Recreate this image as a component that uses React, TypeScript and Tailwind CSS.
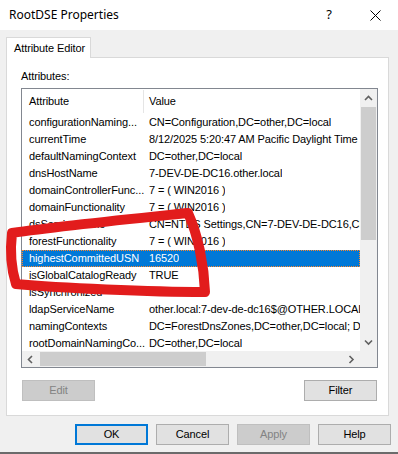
import React from "react";

const rows: [string, string][] = [
  ["configurationNaming...", "CN=Configuration,DC=other,DC=local"],
  ["currentTime", "8/12/2025 5:20:47 AM Pacific Daylight Time"],
  ["defaultNamingContext", "DC=other,DC=local"],
  ["dnsHostName", "7-DEV-DE-DC16.other.local"],
  ["domainControllerFunc...", "7 = ( WIN2016 )"],
  ["domainFunctionality", "7 = ( WIN2016 )"],
  ["dsServiceName", "CN=NTDS Settings,CN=7-DEV-DE-DC16,CN=Servers,CN=Default-First-Site-Name"],
  ["forestFunctionality", "7 = ( WIN2016 )"],
  ["highestCommittedUSN", "16520"],
  ["isGlobalCatalogReady", "TRUE"],
  ["isSynchronized", "TRUE"],
  ["ldapServiceName", "other.local:7-dev-de-dc16$@OTHER.LOCAL"],
  ["namingContexts", "DC=ForestDnsZones,DC=other,DC=local; DC=DomainDnsZones"],
  ["rootDomainNamingCo...", "DC=other,DC=local"],
];

function Chevron({ dir }: { dir: "up" | "down" | "left" | "right" }) {
  const pts: Record<string, string> = {
    up: "1,5 4.5,1.5 8,5",
    down: "1,1.5 4.5,5 8,1.5",
    left: "5,1 1.5,4.5 5,8",
    right: "1.5,1 5,4.5 1.5,8",
  };
  const vertical = dir === "up" || dir === "down";
  return (
    <svg width={vertical ? 9 : 7} height={vertical ? 7 : 9} viewBox={vertical ? "0 0 9 7" : "0 0 7 9"}>
      <polyline points={pts[dir]} fill="none" stroke="#606060" strokeWidth="1.6" />
    </svg>
  );
}

export default function App() {
  return (
    <div className="relative w-[398px] h-[454px] bg-[#f0f0f0] overflow-hidden font-['Liberation_Sans',Arial,sans-serif] text-[11px] tracking-[-0.1px] text-black">
      {/* Title bar */}
      <div className="h-[30px] bg-white flex items-center">
        <div className="flex-1 pl-[9px] font-['Noto_Sans',sans-serif] text-[12px] tracking-normal">RootDSE Properties</div>
        <div className="w-[46px] h-full flex items-center justify-center font-['Noto_Sans',sans-serif] text-[13px] tracking-normal">?</div>
        <div className="w-[46px] h-full flex items-center justify-center">
          <svg width="11" height="11" viewBox="0 0 11 11">
            <line x1="0.5" y1="0.5" x2="10.5" y2="10.5" stroke="#000" strokeWidth="1" />
            <line x1="10.5" y1="0.5" x2="0.5" y2="10.5" stroke="#000" strokeWidth="1" />
          </svg>
        </div>
      </div>

      {/* Tab + panel */}
      <div className="pl-[6px] pt-[7px]">
        <div className="relative z-10 w-[85px] h-[21px] -mb-[1px] bg-white border border-b-0 border-[#d9d9d9] pl-[7px] flex items-center">
          Attribute Editor
        </div>
        <div className="w-[383px] h-[359px] bg-white border border-[#d9d9d9] pt-[12px] pl-[14px]">
          <div className="leading-[13px]">Attributes:</div>
          <div className="mt-[5px] w-[357px] h-[280px] border border-[#828790] flex flex-col">
            <div className="flex h-[262px]">
              <div className="w-[338px] overflow-hidden">
                <div className="h-[25px] flex items-center">
                  <div className="w-[121px] pl-[7px]">Attribute</div>
                  <div className="w-[1px] h-[23px] bg-[#e5e5e5]" />
                  <div className="pl-[5px]">Value</div>
                </div>
                {rows.map(([a, v], i) => {
                  const sel = i === 8;
                  return (
                    <div
                      key={a}
                      className={
                        sel
                          ? "h-[17px] flex items-center bg-[#0078d7] text-white border border-dotted border-[#ff8728] whitespace-nowrap"
                          : "h-[17px] flex items-center whitespace-nowrap"
                      }
                    >
                      <div className={sel ? "w-[120px] pl-[6px] shrink-0" : "w-[121px] pl-[7px] shrink-0"}>{a}</div>
                      <div className="pl-[6px] overflow-hidden">{v}</div>
                    </div>
                  );
                })}
              </div>
              <div className="w-[17px] bg-[#f0f0f0] flex flex-col">
                <div className="h-[18px] flex items-center justify-center">
                  <Chevron dir="up" />
                </div>
                <div className="h-[133px] mx-[1px] bg-[#cdcdcd]" />
                <div className="flex-1" />
                <div className="h-[17px] flex items-center justify-center">
                  <Chevron dir="down" />
                </div>
              </div>
            </div>
            <div className="flex h-[16px] bg-[#f0f0f0]">
              <div className="w-[338px] flex items-center">
                <div className="w-[17px] h-full flex items-center justify-center">
                  <Chevron dir="left" />
                </div>
                <div className="w-[166px] h-[14px] ml-[1px] bg-[#cdcdcd]" />
                <div className="flex-1" />
                <div className="w-[17px] h-full flex items-center justify-center">
                  <Chevron dir="right" />
                </div>
              </div>
              <div className="w-[17px] bg-[#f0f0f0]" />
            </div>
          </div>
          <div className="mt-[12px] w-[356px] flex justify-between">
            <div className="ml-[1px] w-[73px] h-[21px] bg-[#cccccc] border border-[#bfbfbf] text-[#838383] flex items-center justify-center">
              Edit
            </div>
            <div className="w-[73px] h-[21px] bg-[#e1e1e1] border border-[#adadad] flex items-center justify-center">
              Filter
            </div>
          </div>
        </div>
      </div>

      {/* Bottom buttons */}
      <div className="mt-[8px] pl-[75px] flex gap-[8px]">
        <div className="w-[73px] h-[21px] bg-[#e1e1e1] border-2 border-[#0078d7] flex items-center justify-center">OK</div>
        <div className="w-[73px] h-[21px] bg-[#e1e1e1] border border-[#adadad] flex items-center justify-center">Cancel</div>
        <div className="w-[73px] h-[21px] bg-[#cccccc] border border-[#bfbfbf] text-[#838383] flex items-center justify-center">Apply</div>
        <div className="w-[73px] h-[21px] bg-[#e1e1e1] border border-[#adadad] flex items-center justify-center">Help</div>
      </div>
      <div className="absolute left-0 bottom-0 w-full h-[2px] bg-[#6b6b6b]" />

      {/* Red hand-drawn annotation */}
      <svg className="absolute left-0 top-0 pointer-events-none" width="398" height="454" viewBox="0 0 398 454">
        <path
          d="M 12 233 C 60 226 140 218 188 213 C 198 235 204 265 205 292 C 150 292 60 288 16 284 C 11 268 10 250 12 233 Z"
          fill="none"
          stroke="#e21c1c"
          strokeWidth="10"
          strokeLinejoin="round"
          strokeLinecap="round"
        />
      </svg>
    </div>
  );
}
